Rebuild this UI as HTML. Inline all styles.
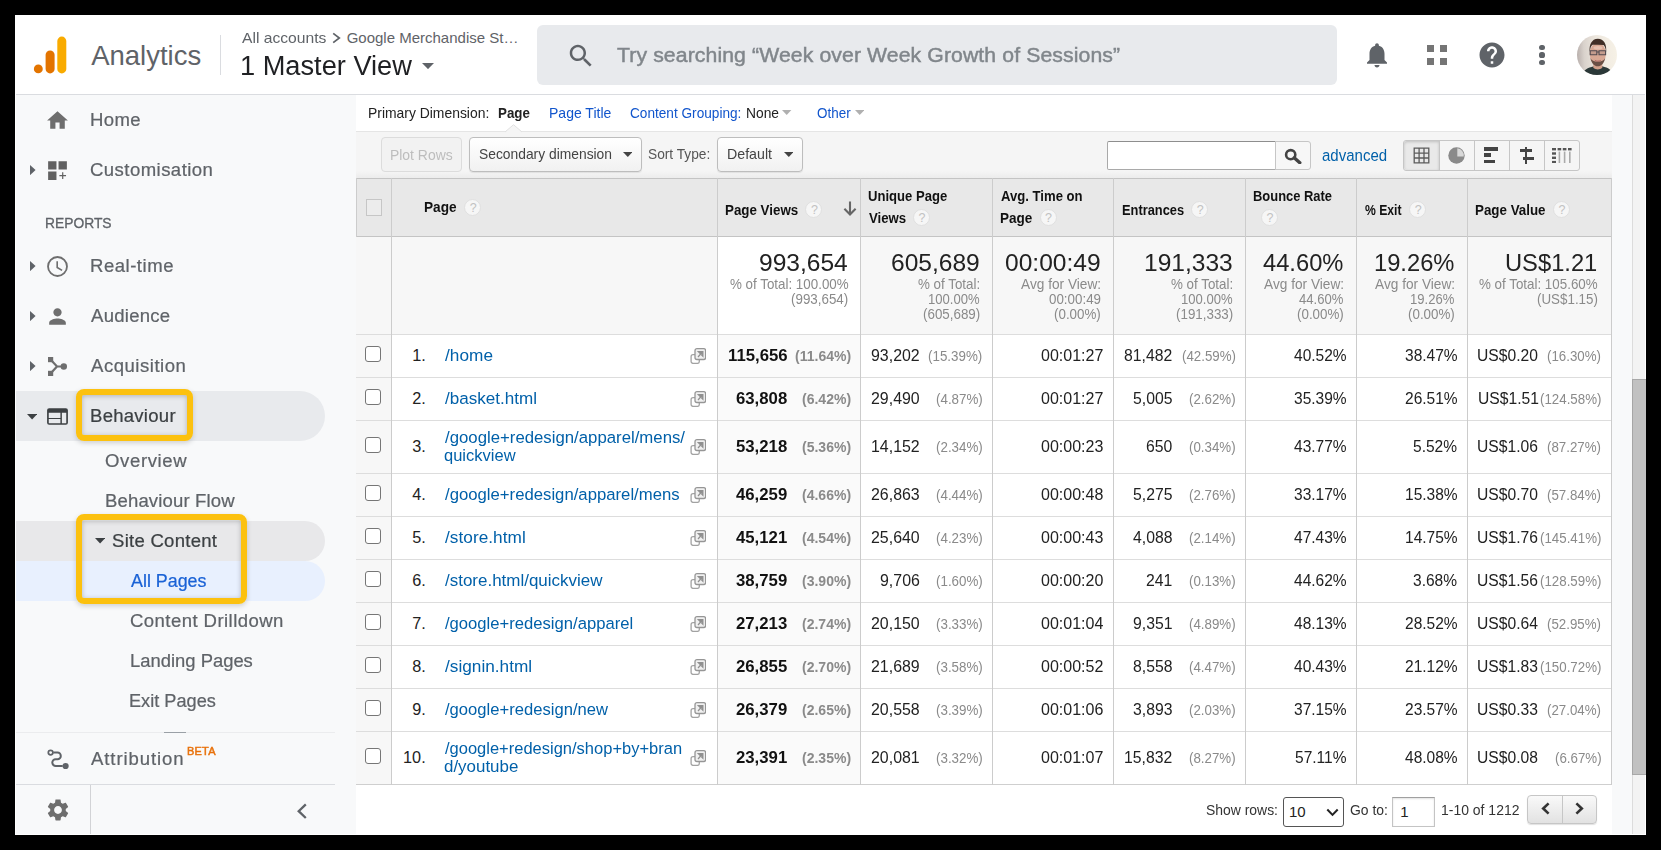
<!DOCTYPE html>
<html><head><meta charset="utf-8"><title>Analytics</title><style>
html,body{margin:0;padding:0;background:#000;}
body{width:1661px;height:850px;overflow:hidden;position:relative;font-family:"Liberation Sans",sans-serif;}
#app{position:absolute;left:0;top:0;width:1661px;height:850px;clip-path:inset(15px 15px 15px 15px);background:#fff;}
.r{position:absolute;box-sizing:border-box;display:block;}
.t{position:absolute;white-space:nowrap;line-height:1;display:block;transform-origin:0 0;}
</style></head><body><div id="app">
<div class="r" style="left:15px;top:15px;width:1631px;height:79px;background:#fff;"></div>
<div class="r" style="left:15px;top:94px;width:1631px;height:1px;background:#dadce0;"></div>
<div class="r" style="left:15px;top:95px;width:341px;height:740px;background:#f8f9fa;"></div>
<div class="r" style="left:356px;top:95px;width:1256px;height:740px;background:#fff;"></div>
<div class="r" style="left:1612px;top:95px;width:20px;height:740px;background:#f8f9fa;"></div>
<div class="r" style="left:1632px;top:95px;width:14px;height:740px;background:#f3f3f3;border-left:1px solid #dcdcdc;"></div>
<div class="r" style="left:1645px;top:15px;width:1px;height:820px;background:#fff;"></div>
<div class="r" style="left:1632px;top:379px;width:14px;height:396px;background:#c1c1c1;border-left:1px solid #a6a6a6;border-top:1px solid #a8a8a8;border-bottom:1px solid #a8a8a8;"></div>
<svg class="r" style="left:30px;top:30px" width="50" height="50" viewBox="0 0 50 50"><circle cx="8.3" cy="38.9" r="4.45" fill="#e37400"/><rect x="15.6" y="20.4" width="9" height="23" rx="4.5" fill="#e37400"/><rect x="27.3" y="6.6" width="9" height="36.8" rx="4.5" fill="#f9ab00"/></svg>
<span class="t" style="left:91.18px;top:42px;font-size:27.5px;color:#5f6368;">Analytics</span>
<div class="r" style="left:220px;top:35px;width:1px;height:40px;background:#dadce0;"></div>
<span class="t" style="left:241.9px;top:30px;font-size:15px;color:#5f6368;transform:scaleX(1.0439);">All accounts</span>
<svg class="r" style="left:331px;top:31px" width="12" height="14" viewBox="0 0 12 14"><path d="M2.200 2.400L8.300 7l-6.100 4.600" fill="none" stroke="#5f6368" stroke-width="1.700"/></svg>
<span class="t" style="left:346.65px;top:30px;font-size:15px;color:#5f6368;">Google Merchandise St…</span>
<span class="t" style="left:239.88px;top:53px;font-size:27px;color:#202124;transform:scaleX(1.0076);">1 Master View</span>
<svg class="r" style="left:421.5px;top:62.5px" width="12" height="6.2" viewBox="0 0 12 6"><path d="M0 0h12L6 6z" fill="#5f6368"/></svg>
<div class="r" style="left:537px;top:25px;width:800px;height:60px;background:#e8eaed;border-radius:6px;"></div>
<svg class="r" style="left:566px;top:41px;" width="30" height="30" viewBox="0 0 24 24"><path d="M15.5 14h-.79l-.28-.27C15.41 12.59 16 11.11 16 9.5 16 5.91 13.09 3 9.5 3S3 5.91 3 9.5 5.91 16 9.5 16c1.61 0 3.09-.59 4.23-1.57l.27.28v.79l5 4.99L20.49 19l-4.99-5zm-6 0C7.01 14 5 11.99 5 9.5S7.01 5 9.5 5 14 7.01 14 9.5 11.99 14 9.5 14z" fill="#5f6368"/></svg>
<span class="t" style="left:617.4px;top:45px;font-size:20px;color:#80868b;letter-spacing:0.1px;transform:scaleX(1.0600);-webkit-text-stroke:0.45px #80868b;">Try searching “Week over Week Growth of Sessions”</span>
<svg class="r" style="left:1362px;top:40px;" width="30" height="30" viewBox="0 0 24 24"><path d="M12 22c1.1 0 2-.9 2-2h-4c0 1.1.89 2 2 2zm6-6v-5c0-3.07-1.64-5.64-4.5-6.32V4c0-.83-.67-1.5-1.5-1.5s-1.5.67-1.5 1.5v.68C7.63 5.36 6 7.92 6 11v5l-2 2v1h16v-1l-2-2z" fill="#5f6368"/></svg>
<div class="r" style="left:1427px;top:44.9px;width:7.4px;height:7.4px;background:#757575;"></div>
<div class="r" style="left:1439.8px;top:44.9px;width:7.4px;height:7.4px;background:#757575;"></div>
<div class="r" style="left:1427px;top:57.7px;width:7.4px;height:7.4px;background:#757575;"></div>
<div class="r" style="left:1439.8px;top:57.7px;width:7.4px;height:7.4px;background:#757575;"></div>
<svg class="r" style="left:1477.2px;top:40px;" width="30" height="30" viewBox="0 0 24 24"><path d="M12 2C6.48 2 2 6.48 2 12s4.48 10 10 10 10-4.48 10-10S17.52 2 12 2zm1 17h-2v-2h2v2zm2.07-7.75l-.9.92C13.45 12.9 13 13.5 13 15h-2v-.5c0-1.1.45-2.1 1.17-2.83l1.24-1.26c.37-.36.59-.86.59-1.41 0-1.1-.9-2-2-2s-2 .9-2 2H8c0-2.21 1.79-4 4-4s4 1.79 4 4c0 .88-.36 1.68-.93 2.25z" fill="#5f6368"/></svg>
<div class="r" style="left:1539.4px;top:45px;width:5.2px;height:5.2px;background:#5f6368;border-radius:50%;"></div>
<div class="r" style="left:1539.4px;top:52.4px;width:5.2px;height:5.2px;background:#5f6368;border-radius:50%;"></div>
<div class="r" style="left:1539.4px;top:59.8px;width:5.2px;height:5.2px;background:#5f6368;border-radius:50%;"></div>
<svg class="r" style="left:1577px;top:35px" width="40" height="40" viewBox="0 0 40 40"><defs><clipPath id="av"><circle cx="20" cy="20" r="20"/></clipPath><linearGradient id="avbg" x1="0" y1="0.5" x2="1" y2="0.45"><stop offset="0" stop-color="#b9b0ad"/><stop offset="0.18" stop-color="#d9d2cc"/><stop offset="0.5" stop-color="#eee8df"/><stop offset="1" stop-color="#f6f1e6"/></linearGradient><filter id="avbl" x="-10%" y="-10%" width="120%" height="120%"><feGaussianBlur stdDeviation="0.700"/></filter></defs><g clip-path="url(#av)"><rect width="40" height="40" fill="url(#avbg)"/><g filter="url(#avbl)"><path d="M5 41c.5-5 4-7.500 9.500-9l3-1h7l3 1c5.500 1.500 8 4 8.500 9z" fill="#2c3838"/><path d="M16.300 25h9v7.800c-2.800 2.300-6.200 2.300-9 0z" fill="#d2a08b"/><ellipse cx="20.800" cy="18.800" rx="8.100" ry="11" fill="#d8a894"/><path d="M13.400 23c1 5.500 4 8.300 7.400 8.300s6.400-2.800 7.400-8.300c-1.400 2.600-3.600 3.600-7.400 3.600s-6-1-7.400-3.600z" fill="#6b4f45"/><path d="M12.700 17c-.9-6.800 2-13.200 8.100-13.200s9.200 5.600 8.300 13.200c-.4-3.600-1.300-5.900-2.700-6.900-3.600-.4-7.200-.4-10.800-.4-1.600 1-2.500 3.500-2.900 7.300z" fill="#3f2f28"/><ellipse cx="21" cy="12.800" rx="4.500" ry="1.800" fill="#e6c1b0"/><path d="M13.200 15.800h6.600v3.900h-6.600zM22 15.800h6.600v3.900h-6.600zM19.800 17h2.200" fill="rgba(120,110,115,.2)" stroke="#514a50" stroke-width="1.100"/><path d="M17.800 25.300c2 1.100 4 1.100 6 0" fill="none" stroke="#b56a66" stroke-width="1"/></g></g></svg>
<div class="r" style="left:15px;top:391px;width:310px;height:50px;background:#e8eaed;border-radius:0 25px 25px 0;"></div>
<div class="r" style="left:15px;top:521px;width:310px;height:40px;background:#e8e8ea;border-radius:0 20px 20px 0;"></div>
<div class="r" style="left:15px;top:561px;width:310px;height:40px;background:#e8f0fe;border-radius:0 20px 20px 0;"></div>
<svg class="r" style="left:45px;top:107.9px;" width="25" height="25" viewBox="0 0 24 24"><path d="M10 20v-6h4v6h5v-8h3L12 3 2 12h3v8z" fill="#6e6e6e"/></svg>
<svg class="r" style="left:45px;top:158.1px;" width="25" height="25" viewBox="0 0 24 24"><path d="M3 3h8v8H3zm10 0h8v8h-8zM3 13h8v8H3zM16.420 13.700h1.160v2.620h2.620v1.160h-2.620v2.620h-1.160v-2.620h-2.620v-1.160h2.620z" fill="#616161"/></svg>
<svg class="r" style="left:45px;top:253.8px;" width="25" height="25" viewBox="0 0 24 24"><circle cx="12" cy="12" r="9.100" fill="none" stroke="#6e6e6e" stroke-width="1.750"/><path d="M11.700 7v5.900l4.700 2.800" fill="none" stroke="#6e6e6e" stroke-width="1.550"/></svg>
<svg class="r" style="left:45px;top:304.1px;" width="25" height="25" viewBox="0 0 24 24"><path d="M12 12c2.210 0 4-1.790 4-4s-1.790-4-4-4-4 1.790-4 4 1.790 4 4 4zm0 2c-2.670 0-8 1.340-8 4v2h16v-2c0-2.660-5.330-4-8-4z" fill="#6e6e6e"/></svg>
<svg class="r" style="left:47.5px;top:357px" width="20" height="19" viewBox="0 0 20 19"><g fill="#6e6e6e"><rect x="0" y="0" width="5.200" height="5.200"/><rect x="0" y="13.800" width="5.200" height="5.200"/><circle cx="15.800" cy="9.500" r="3.200"/></g><path d="M3 3l6 6.500h7M3 16l6-6.500" fill="none" stroke="#6e6e6e" stroke-width="2.200"/></svg>
<svg class="r" style="left:45px;top:404px;" width="25" height="25" viewBox="0 0 24 24"><path fill-rule="evenodd" d="M4 4h16a2 2 0 0 1 2 2v12a2 2 0 0 1-2 2H4a2 2 0 0 1-2-2V6a2 2 0 0 1 2-2zM3.600 8.500v4.900h11.200V8.500zM3.600 14.500v3.900h11.200v-3.900zM16.200 8.500v9.900h4.200V8.500z" fill="#3c4043"/></svg>
<svg class="r" style="left:30.200px;top:165.1px" width="5.600" height="10.200" viewBox="0 0 5.600 10.200"><path d="M0 0l5.600 5.100L0 10.200z" fill="#5f6368"/></svg>
<svg class="r" style="left:30.200px;top:261.3px" width="5.600" height="10.200" viewBox="0 0 5.600 10.200"><path d="M0 0l5.600 5.100L0 10.200z" fill="#5f6368"/></svg>
<svg class="r" style="left:30.200px;top:311.1px" width="5.600" height="10.200" viewBox="0 0 5.600 10.200"><path d="M0 0l5.600 5.100L0 10.200z" fill="#5f6368"/></svg>
<svg class="r" style="left:30.200px;top:361.2px" width="5.600" height="10.200" viewBox="0 0 5.600 10.200"><path d="M0 0l5.600 5.100L0 10.200z" fill="#5f6368"/></svg>
<svg class="r" style="left:27.200px;top:414px" width="10.200" height="5.500" viewBox="0 0 10.200 5.500"><path d="M0 0h10.200L5.100 5.500z" fill="#3c4043"/></svg>
<svg class="r" style="left:95px;top:538.300px" width="10.200" height="5.500" viewBox="0 0 10.200 5.500"><path d="M0 0h10.200L5.100 5.500z" fill="#3c4043"/></svg>
<span class="t" style="left:89.64px;top:112px;font-size:17.5px;color:#5f6368;letter-spacing:0.38px;transform:scaleX(1.0600);-webkit-text-stroke:0.22px #5f6368;">Home</span>
<span class="t" style="left:90.17px;top:162px;font-size:17.5px;color:#5f6368;letter-spacing:0.42px;transform:scaleX(1.0600);-webkit-text-stroke:0.22px #5f6368;">Customisation</span>
<span class="t" style="left:44.87px;top:217px;font-size:13.75px;color:#5f6368;transform:scaleX(1.0050);-webkit-text-stroke:0.3px #5f6368;">REPORTS</span>
<span class="t" style="left:89.64px;top:258px;font-size:17.5px;color:#5f6368;letter-spacing:0.48px;transform:scaleX(1.0600);-webkit-text-stroke:0.22px #5f6368;">Real-time</span>
<span class="t" style="left:91.1px;top:308px;font-size:17.5px;color:#5f6368;letter-spacing:0.24px;transform:scaleX(1.0600);-webkit-text-stroke:0.22px #5f6368;">Audience</span>
<span class="t" style="left:91.1px;top:358px;font-size:17.5px;color:#5f6368;letter-spacing:0.49px;transform:scaleX(1.0600);-webkit-text-stroke:0.22px #5f6368;">Acquisition</span>
<span class="t" style="left:89.64px;top:408px;font-size:17.5px;color:#3c4043;letter-spacing:0.24px;transform:scaleX(1.0600);-webkit-text-stroke:0.22px #3c4043;">Behaviour</span>
<span class="t" style="left:105.07px;top:453px;font-size:17.5px;color:#5f6368;letter-spacing:0.59px;transform:scaleX(1.0600);-webkit-text-stroke:0.22px #5f6368;">Overview</span>
<span class="t" style="left:104.54px;top:493px;font-size:17.5px;color:#5f6368;letter-spacing:0.13px;transform:scaleX(1.0600);-webkit-text-stroke:0.22px #5f6368;">Behaviour Flow</span>
<span class="t" style="left:112.07px;top:533px;font-size:17.5px;color:#3c4043;letter-spacing:0.25px;transform:scaleX(1.0600);-webkit-text-stroke:0.22px #3c4043;">Site Content</span>
<span class="t" style="left:131.1px;top:573px;font-size:17.5px;color:#1a62d6;transform:scaleX(1.0212);-webkit-text-stroke:0.22px #1a62d6;">All Pages</span>
<span class="t" style="left:130.17px;top:613px;font-size:17.5px;color:#5f6368;letter-spacing:0.41px;transform:scaleX(1.0600);-webkit-text-stroke:0.22px #5f6368;">Content Drilldown</span>
<span class="t" style="left:129.65px;top:653px;font-size:17.5px;color:#5f6368;transform:scaleX(1.0519);-webkit-text-stroke:0.22px #5f6368;">Landing Pages</span>
<span class="t" style="left:129.47px;top:693px;font-size:17.5px;color:#5f6368;transform:scaleX(1.0377);-webkit-text-stroke:0.22px #5f6368;">Exit Pages</span>
<div class="r" style="left:15px;top:732px;width:320px;height:1px;background:#ebecee;"></div>
<div class="r" style="left:164px;top:732px;width:22px;height:1px;background:#9aa0a6;"></div>
<div class="r" style="left:15px;top:784px;width:320px;height:1px;background:#dadce0;"></div>
<div class="r" style="left:90px;top:785px;width:1px;height:50px;background:#d2d3d6;"></div>
<svg class="r" style="left:46.500px;top:748.600px" width="23" height="21" viewBox="0 0 23 21"><circle cx="3.600" cy="3.600" r="2.300" fill="none" stroke="#5f6368" stroke-width="1.700"/><path d="M6.300 3.600h4.200a3.300 3.300 0 0 1 0 6.600h-1.800a3.400 3.400 0 0 0 0 6.800h7" fill="none" stroke="#5f6368" stroke-width="2"/><circle cx="18.600" cy="17" r="3.100" fill="#5f6368"/></svg>
<span class="t" style="left:90.6px;top:751px;font-size:17.5px;color:#5f6368;letter-spacing:0.85px;transform:scaleX(1.0600);-webkit-text-stroke:0.22px #5f6368;">Attribution</span>
<span class="t" style="left:187.07px;top:747px;font-size:10.4px;color:#e8710a;letter-spacing:0.2px;transform:scaleX(1.0600);-webkit-text-stroke:0.45px #e8710a;">BETA</span>
<svg class="r" style="left:44.9px;top:797.1px;" width="26" height="26" viewBox="0 0 24 24"><path d="M19.140 12.940c.040-.300.060-.610.060-.940 0-.320-.020-.640-.070-.940l2.030-1.580c.180-.140.230-.410.120-.610l-1.920-3.320c-.120-.220-.370-.290-.590-.220l-2.390.960c-.500-.380-1.030-.700-1.620-.940l-.360-2.540c-.040-.240-.240-.410-.480-.410h-3.840c-.240 0-.430.170-.470.410l-.360 2.540c-.590.240-1.130.570-1.620.940l-2.390-.960c-.220-.080-.470 0-.590.220L2.740 8.870c-.120.210-.080.470.120.610l2.030 1.580c-.050.300-.090.630-.090.940s.020.640.070.940l-2.030 1.580c-.180.140-.230.410-.120.610l1.920 3.320c.120.220.370.290.590.220l2.390-.960c.500.380 1.030.700 1.620.940l.360 2.540c.050.240.240.410.480.410h3.840c.240 0 .440-.170.470-.410l.360-2.540c.590-.240 1.130-.560 1.620-.940l2.390.960c.220.080.470 0 .590-.220l1.920-3.320c.120-.220.070-.470-.120-.610l-2.010-1.580zM12 15.600c-1.980 0-3.600-1.620-3.600-3.600s1.620-3.600 3.600-3.600 3.600 1.620 3.600 3.600-1.620 3.600-3.600 3.600z" fill="#6e6e6e"/></svg>
<svg class="r" style="left:295px;top:802px" width="14" height="18" viewBox="0 0 14 18"><path d="M10.800 2.400L3.700 9.200l7.100 6.800" fill="none" stroke="#5f6368" stroke-width="2.300"/></svg>
<div class="r" style="left:76.3px;top:388.9px;width:117.1px;height:51.8px;background:transparent;border:6.100px solid #fcc10f;border-radius:8px;background:transparent;box-shadow:0 2px 5px rgba(60,64,67,.22), inset 0 1px 5px rgba(60,64,67,.32);"></div>
<div class="r" style="left:76.4px;top:514.4px;width:170.3px;height:90px;background:transparent;border:6.100px solid #fcc10f;border-radius:8px;background:transparent;box-shadow:0 2px 5px rgba(60,64,67,.22), inset 0 1px 5px rgba(60,64,67,.32);"></div>
<span class="t" style="left:368.32px;top:106px;font-size:14.5px;color:#222;transform:scaleX(0.9587);">Primary Dimension:</span>
<span class="t" style="left:497.88px;top:106px;font-size:14.5px;color:#222;transform:scaleX(0.9203);font-weight:bold;">Page</span>
<span class="t" style="left:549.01px;top:106px;font-size:14.5px;color:#1155cc;transform:scaleX(0.9661);">Page Title</span>
<span class="t" style="left:630.2px;top:106px;font-size:14.5px;color:#1155cc;transform:scaleX(0.9399);">Content Grouping:</span>
<span class="t" style="left:745.73px;top:106px;font-size:14.5px;color:#222;transform:scaleX(0.9521);">None</span>
<svg class="r" style="left:782.400px;top:109.700px" width="9.400" height="5" viewBox="0 0 9.400 5"><path d="M0 0h9.400L4.700 5z" fill="#b0b0b0"/></svg>
<span class="t" style="left:817.22px;top:106px;font-size:14.5px;color:#1155cc;transform:scaleX(0.9268);">Other</span>
<svg class="r" style="left:855px;top:109.700px" width="9.400" height="5" viewBox="0 0 9.400 5"><path d="M0 0h9.400L4.700 5z" fill="#b0b0b0"/></svg>
<div class="r" style="left:356px;top:131px;width:1256px;height:1px;background:#e5e5e5;"></div>
<div class="r" style="left:356px;top:132px;width:1256px;height:46px;background:#f5f5f5;"></div>
<div class="r" style="left:356px;top:171px;width:1256px;height:7px;background:transparent;background:linear-gradient(#f5f5f5,#ececec);"></div>
<svg class="r" style="left:505px;top:124px" width="17" height="9" viewBox="0 0 17 9"><path d="M0 8.500L8.500 0.700 17 8.500z" fill="#f5f5f5"/><path d="M0 8L8.500 0.700 17 8" fill="none" stroke="#e0e0e0" stroke-width="1"/></svg>
<div class="r" style="left:381px;top:137px;width:81px;height:35px;background:#f2f2f2;border:1px solid #dcdcdc;border-radius:4px;"></div>
<span class="t" style="left:390.24px;top:147px;font-size:15px;color:#bdbdbd;transform:scaleX(0.9278);">Plot Rows</span>
<div class="r" style="left:469px;top:137px;width:173px;height:35px;background:#fafafa;border:1px solid #bdbdbd;border-radius:4px;background:linear-gradient(#ffffff,#f1f1f1);box-shadow:0 1px 1px rgba(0,0,0,.08);"></div>
<span class="t" style="left:478.52px;top:146px;font-size:15px;color:#444;transform:scaleX(0.9220);">Secondary dimension</span>
<svg class="r" style="left:622.600px;top:152px" width="9.600" height="5" viewBox="0 0 9.600 5"><path d="M0 0h9.600L4.800 5z" fill="#444"/></svg>
<span class="t" style="left:648.23px;top:146px;font-size:15px;color:#555;transform:scaleX(0.9152);">Sort Type:</span>
<div class="r" style="left:717px;top:137px;width:86px;height:35px;background:#fafafa;border:1px solid #bdbdbd;border-radius:4px;background:linear-gradient(#ffffff,#f1f1f1);box-shadow:0 1px 1px rgba(0,0,0,.08);"></div>
<span class="t" style="left:726.82px;top:146px;font-size:15px;color:#444;transform:scaleX(0.9470);">Default</span>
<svg class="r" style="left:783.500px;top:152px" width="9.600" height="5" viewBox="0 0 9.600 5"><path d="M0 0h9.600L4.800 5z" fill="#444"/></svg>
<div class="r" style="left:1107px;top:141px;width:169px;height:29px;background:#fff;border:1px solid #a9a9a9;border-top-color:#8e8e8e;border-radius:2px 0 0 2px;"></div>
<div class="r" style="left:1275px;top:141px;width:36px;height:29px;background:#f7f7f7;border:1px solid #c6c6c6;border-radius:0 3px 3px 0;"></div>
<svg class="r" style="left:1284px;top:147.500px" width="18" height="16.500" viewBox="0 0 18 16.500"><circle cx="6.700" cy="6.700" r="4.600" fill="none" stroke="#444" stroke-width="2.600"/><path d="M10.200 9.800l5.600 4.900" stroke="#444" stroke-width="3.400" stroke-linecap="round"/></svg>
<span class="t" style="left:1321.62px;top:147px;font-size:16.25px;color:#0060a9;transform:scaleX(0.9236);">advanced</span>
<div class="r" style="left:1403px;top:140px;width:177px;height:31px;background:#f5f5f5;border:1px solid #c6c6c6;border-radius:3px;"></div>
<div class="r" style="left:1404px;top:141px;width:35px;height:29px;background:#e9e9e9;border-radius:3px 0 0 3px;box-shadow:inset 0 1px 3px rgba(0,0,0,.18);"></div>
<div class="r" style="left:1438.5px;top:141px;width:1px;height:29px;background:#c6c6c6;"></div>
<div class="r" style="left:1473.5px;top:141px;width:1px;height:29px;background:#c6c6c6;"></div>
<div class="r" style="left:1508.5px;top:141px;width:1px;height:29px;background:#c6c6c6;"></div>
<div class="r" style="left:1543.5px;top:141px;width:1px;height:29px;background:#c6c6c6;"></div>
<svg class="r" style="left:1413px;top:147.200px" width="17" height="17" viewBox="0 0 17 17"><path d="M1.200 1.200h14.600v14.600H1.200zM1.200 6.100h14.600M1.200 11h14.600M6.100 1.200v14.600M11 1.200v14.600" fill="none" stroke="#5c5c5c" stroke-width="1.300"/></svg>
<svg class="r" style="left:1447.700px;top:147.200px" width="17" height="17" viewBox="0 0 17 17"><circle cx="8.500" cy="8.500" r="8.200" fill="#8a8a8a"/><path d="M9.300 1.300a7.300 7.300 0 0 1 6.400 8.200h-6.400z" fill="#d8d8d8"/></svg>
<div class="r" style="left:1483.5px;top:147.2px;width:14.5px;height:3.7px;background:#444;"></div>
<div class="r" style="left:1483.5px;top:153.4px;width:7.6px;height:3.7px;background:#444;"></div>
<div class="r" style="left:1483.5px;top:159.6px;width:11.1px;height:3.9px;background:#444;"></div>
<div class="r" style="left:1525px;top:147.2px;width:2.3px;height:16.4px;background:#444;"></div>
<div class="r" style="left:1519.5px;top:149.4px;width:12.8px;height:2.3px;background:#444;"></div>
<div class="r" style="left:1523px;top:157.4px;width:11.3px;height:2.3px;background:#444;"></div>
<svg class="r" style="left:1551.700px;top:147.800px" width="20" height="15.500" viewBox="0 0 20 15.500"><g fill="#555"><rect x="0" y="0" width="4" height="2.400"/><rect x="0" y="4.300" width="4" height="2.400"/><rect x="0" y="8.600" width="4" height="2.400"/><rect x="0" y="12.900" width="4" height="2.400"/><rect x="5.600" y="0" width="3.600" height="2.400"/><rect x="10.800" y="0" width="3.600" height="2.400"/><rect x="16" y="0" width="3.600" height="2.400"/></g><g fill="#aaa"><rect x="6.600" y="3.600" width="1.600" height="11.700"/><rect x="11.800" y="3.600" width="1.600" height="11.700"/><rect x="17" y="3.600" width="1.600" height="11.700"/></g></svg>
<div class="r" style="left:356px;top:178px;width:1256px;height:59px;background:#e8e8e8;"></div>
<div class="r" style="left:356px;top:237px;width:1256px;height:97px;background:#f7f7f7;"></div>
<div class="r" style="left:718px;top:237px;width:142px;height:97px;background:#fff;"></div>
<div class="r" style="left:356px;top:335px;width:35px;height:449px;background:#f7f7f7;"></div>
<div class="r" style="left:718px;top:335px;width:142px;height:449px;background:#fafafa;"></div>
<div class="r" style="left:356px;top:178px;width:1256px;height:1px;background:#c4c4c4;"></div>
<div class="r" style="left:356px;top:236px;width:1256px;height:1px;background:#c4c4c4;"></div>
<div class="r" style="left:356px;top:334px;width:1256px;height:1px;background:#dddddd;"></div>
<div class="r" style="left:356px;top:377px;width:1256px;height:1px;background:#dddddd;"></div>
<div class="r" style="left:356px;top:420px;width:1256px;height:1px;background:#dddddd;"></div>
<div class="r" style="left:356px;top:473px;width:1256px;height:1px;background:#dddddd;"></div>
<div class="r" style="left:356px;top:516px;width:1256px;height:1px;background:#dddddd;"></div>
<div class="r" style="left:356px;top:559px;width:1256px;height:1px;background:#dddddd;"></div>
<div class="r" style="left:356px;top:602px;width:1256px;height:1px;background:#dddddd;"></div>
<div class="r" style="left:356px;top:645px;width:1256px;height:1px;background:#dddddd;"></div>
<div class="r" style="left:356px;top:688px;width:1256px;height:1px;background:#dddddd;"></div>
<div class="r" style="left:356px;top:731px;width:1256px;height:1px;background:#dddddd;"></div>
<div class="r" style="left:356px;top:784px;width:1256px;height:1px;background:#cfcfcf;"></div>
<div class="r" style="left:391px;top:178px;width:1px;height:607px;background:#cccccc;"></div>
<div class="r" style="left:717px;top:178px;width:1px;height:607px;background:#cccccc;"></div>
<div class="r" style="left:860px;top:178px;width:1px;height:607px;background:#cccccc;"></div>
<div class="r" style="left:992px;top:178px;width:1px;height:607px;background:#cccccc;"></div>
<div class="r" style="left:1113px;top:178px;width:1px;height:607px;background:#cccccc;"></div>
<div class="r" style="left:1245px;top:178px;width:1px;height:607px;background:#cccccc;"></div>
<div class="r" style="left:1356px;top:178px;width:1px;height:607px;background:#cccccc;"></div>
<div class="r" style="left:1467px;top:178px;width:1px;height:607px;background:#cccccc;"></div>
<div class="r" style="left:1611px;top:178px;width:1px;height:607px;background:#cccccc;"></div>
<div class="r" style="left:356px;top:178px;width:1px;height:59px;background:#cccccc;"></div>
<div class="r" style="left:366px;top:199px;width:16px;height:16.5px;background:#ececec;border:1px solid #c6c6c6;"></div>
<span class="t" style="left:423.96px;top:200px;font-size:14.5px;color:#111;transform:scaleX(0.9414);font-weight:bold;">Page</span>
<div class="r" style="left:464.1px;top:199.2px;width:17px;height:17px;background:#f6f6f6;border-radius:50%;border:1px solid #e0e0e0;"></div>
<span class="t" style="left:469.7px;top:202px;font-size:12.5px;color:#c2c2c2;">?</span>
<span class="t" style="left:725.08px;top:203px;font-size:14.5px;color:#111;transform:scaleX(0.9205);font-weight:bold;">Page Views</span>
<div class="r" style="left:805.4px;top:200.8px;width:17px;height:17px;background:#f6f6f6;border-radius:50%;border:1px solid #e0e0e0;"></div>
<span class="t" style="left:811px;top:204px;font-size:12.5px;color:#c2c2c2;">?</span>
<svg class="r" style="left:843px;top:200.500px" width="14" height="15" viewBox="0 0 14 15"><path d="M7 0.600v12.600M1.400 7.800L7 13.400l5.600-5.600" fill="none" stroke="#666" stroke-width="2.100"/></svg>
<span class="t" style="left:868.11px;top:189px;font-size:14.5px;color:#111;transform:scaleX(0.9017);font-weight:bold;">Unique Page</span>
<span class="t" style="left:868.79px;top:211px;font-size:14.5px;color:#111;transform:scaleX(0.9097);font-weight:bold;">Views</span>
<div class="r" style="left:913px;top:209.1px;width:17px;height:17px;background:#f6f6f6;border-radius:50%;border:1px solid #e0e0e0;"></div>
<span class="t" style="left:918.6px;top:212px;font-size:12.5px;color:#c2c2c2;">?</span>
<span class="t" style="left:1000.56px;top:189px;font-size:14.5px;color:#111;transform:scaleX(0.9045);font-weight:bold;">Avg. Time on</span>
<span class="t" style="left:999.97px;top:211px;font-size:14.5px;color:#111;transform:scaleX(0.9323);font-weight:bold;">Page</span>
<div class="r" style="left:1039.5px;top:209.1px;width:17px;height:17px;background:#f6f6f6;border-radius:50%;border:1px solid #e0e0e0;"></div>
<span class="t" style="left:1045.1px;top:212px;font-size:12.5px;color:#c2c2c2;">?</span>
<span class="t" style="left:1121.51px;top:203px;font-size:14.5px;color:#111;transform:scaleX(0.8861);font-weight:bold;">Entrances</span>
<div class="r" style="left:1191.1px;top:200.8px;width:17px;height:17px;background:#f6f6f6;border-radius:50%;border:1px solid #e0e0e0;"></div>
<span class="t" style="left:1196.7px;top:204px;font-size:12.5px;color:#c2c2c2;">?</span>
<span class="t" style="left:1253.41px;top:189px;font-size:14.5px;color:#111;transform:scaleX(0.8917);font-weight:bold;">Bounce Rate</span>
<div class="r" style="left:1260.9px;top:209.2px;width:17px;height:17px;background:#f6f6f6;border-radius:50%;border:1px solid #e0e0e0;"></div>
<span class="t" style="left:1266.5px;top:212px;font-size:12.5px;color:#c2c2c2;">?</span>
<span class="t" style="left:1364.89px;top:203px;font-size:14.5px;color:#111;transform:scaleX(0.8395);font-weight:bold;">% Exit</span>
<div class="r" style="left:1409.2px;top:200.8px;width:17px;height:17px;background:#f6f6f6;border-radius:50%;border:1px solid #e0e0e0;"></div>
<span class="t" style="left:1414.8px;top:204px;font-size:12.5px;color:#c2c2c2;">?</span>
<span class="t" style="left:1475.48px;top:203px;font-size:14.5px;color:#111;transform:scaleX(0.9211);font-weight:bold;">Page Value</span>
<div class="r" style="left:1552.8px;top:200.8px;width:17px;height:17px;background:#f6f6f6;border-radius:50%;border:1px solid #e0e0e0;"></div>
<span class="t" style="left:1558.4px;top:204px;font-size:12.5px;color:#c2c2c2;">?</span>
<span class="t" style="left:759.22px;top:251px;font-size:24px;color:#222;transform:scaleX(1.0230);">993,654</span>
<span class="t" style="left:729.58px;top:278px;font-size:13.75px;color:#8a8a8a;transform:scaleX(0.9720);">% of Total: 100.00%</span>
<span class="t" style="left:791.42px;top:293px;font-size:13.75px;color:#8a8a8a;transform:scaleX(0.9720);">(993,654)</span>
<span class="t" style="left:891.11px;top:251px;font-size:24px;color:#222;transform:scaleX(1.0230);">605,689</span>
<span class="t" style="left:918.31px;top:278px;font-size:13.75px;color:#8a8a8a;transform:scaleX(0.9720);">% of Total:</span>
<span class="t" style="left:928.24px;top:293px;font-size:13.75px;color:#8a8a8a;transform:scaleX(0.9500);">100.00%</span>
<span class="t" style="left:922.92px;top:308px;font-size:13.75px;color:#8a8a8a;transform:scaleX(0.9720);">(605,689)</span>
<span class="t" style="left:1005.2px;top:251px;font-size:24px;color:#222;transform:scaleX(1.0230);">00:00:49</span>
<span class="t" style="left:1021.45px;top:278px;font-size:13.75px;color:#8a8a8a;transform:scaleX(0.9950);">Avg for View:</span>
<span class="t" style="left:1048.91px;top:293px;font-size:13.75px;color:#8a8a8a;transform:scaleX(0.9720);">00:00:49</span>
<span class="t" style="left:1054.25px;top:308px;font-size:13.75px;color:#8a8a8a;transform:scaleX(0.9720);">(0.00%)</span>
<span class="t" style="left:1144.11px;top:251px;font-size:24px;color:#222;transform:scaleX(1.0230);">191,333</span>
<span class="t" style="left:1171.31px;top:278px;font-size:13.75px;color:#8a8a8a;transform:scaleX(0.9720);">% of Total:</span>
<span class="t" style="left:1181.24px;top:293px;font-size:13.75px;color:#8a8a8a;transform:scaleX(0.9500);">100.00%</span>
<span class="t" style="left:1175.92px;top:308px;font-size:13.75px;color:#8a8a8a;transform:scaleX(0.9720);">(191,333)</span>
<span class="t" style="left:1263.17px;top:251px;font-size:24px;color:#222;transform:scaleX(0.9880);">44.60%</span>
<span class="t" style="left:1264.45px;top:278px;font-size:13.75px;color:#8a8a8a;transform:scaleX(0.9950);">Avg for View:</span>
<span class="t" style="left:1299.48px;top:293px;font-size:13.75px;color:#8a8a8a;transform:scaleX(0.9500);">44.60%</span>
<span class="t" style="left:1297.25px;top:308px;font-size:13.75px;color:#8a8a8a;transform:scaleX(0.9720);">(0.00%)</span>
<span class="t" style="left:1374.17px;top:251px;font-size:24px;color:#222;transform:scaleX(0.9880);">19.26%</span>
<span class="t" style="left:1375.45px;top:278px;font-size:13.75px;color:#8a8a8a;transform:scaleX(0.9950);">Avg for View:</span>
<span class="t" style="left:1410.48px;top:293px;font-size:13.75px;color:#8a8a8a;transform:scaleX(0.9500);">19.26%</span>
<span class="t" style="left:1408.25px;top:308px;font-size:13.75px;color:#8a8a8a;transform:scaleX(0.9720);">(0.00%)</span>
<span class="t" style="left:1505.06px;top:251px;font-size:24px;color:#222;transform:scaleX(0.9880);">US$1.21</span>
<span class="t" style="left:1478.58px;top:278px;font-size:13.75px;color:#8a8a8a;transform:scaleX(0.9720);">% of Total: 105.60%</span>
<span class="t" style="left:1536.66px;top:293px;font-size:13.75px;color:#8a8a8a;transform:scaleX(0.9720);">(US$1.15)</span>
<div class="r" style="left:365.3px;top:346.3px;width:15.7px;height:15.7px;background:#fff;border:1.300px solid #767676;border-radius:3px;"></div>
<span class="t" style="left:412.2px;top:347px;font-size:16.25px;color:#222;">1.</span>
<span class="t" style="left:444.6px;top:347px;font-size:16.25px;color:#0060a9;letter-spacing:0.05px;transform:scaleX(1.0600);">/home</span>
<svg class="r" style="left:689.800px;top:347.7px" width="16.500" height="16.500" viewBox="0 0 16.500 16.500"><rect x="1.100" y="6.600" width="8.200" height="8.800" rx="2" fill="#fff" stroke="#a2a2a2" stroke-width="1.300"/><rect x="5" y="0.700" width="10.600" height="10.800" rx="2" fill="#f0f0f0" stroke="#969696" stroke-width="1.300"/><path d="M8.300 3.600h4.600v4.600zM12 4.500L8 9" fill="#909090" stroke="#909090" stroke-width="1.200"/></svg>
<span class="t" style="left:727.73px;top:347px;font-size:16.25px;color:#111;transform:scaleX(1.0300);font-weight:bold;">115,656</span>
<span class="t" style="left:794.84px;top:350px;font-size:13.75px;color:#8a8a8a;transform:scaleX(1.0200);font-weight:bold;">(11.64%)</span>
<span class="t" style="left:870.9px;top:347px;font-size:16.25px;color:#222;transform:scaleX(0.9800);">93,202</span>
<span class="t" style="left:928.34px;top:350px;font-size:13.75px;color:#8a8a8a;transform:scaleX(0.9720);">(15.39%)</span>
<span class="t" style="left:1041.04px;top:347px;font-size:16.25px;color:#222;transform:scaleX(0.9850);">00:01:27</span>
<span class="t" style="left:1124.49px;top:347px;font-size:16.25px;color:#222;transform:scaleX(0.9700);">81,482</span>
<span class="t" style="left:1181.56px;top:350px;font-size:13.75px;color:#8a8a8a;transform:scaleX(0.9680);">(42.59%)</span>
<span class="t" style="left:1293.65px;top:347px;font-size:16.25px;color:#222;transform:scaleX(0.9550);">40.52%</span>
<span class="t" style="left:1404.55px;top:347px;font-size:16.25px;color:#222;transform:scaleX(0.9550);">38.47%</span>
<span class="t" style="left:1477.39px;top:347px;font-size:16.25px;color:#222;transform:scaleX(0.9630);">US$0.20</span>
<span class="t" style="left:1547.46px;top:350px;font-size:13.75px;color:#8a8a8a;transform:scaleX(0.9680);">(16.30%)</span>
<div class="r" style="left:365.3px;top:389.3px;width:15.7px;height:15.7px;background:#fff;border:1.300px solid #767676;border-radius:3px;"></div>
<span class="t" style="left:412.2px;top:390px;font-size:16.25px;color:#222;">2.</span>
<span class="t" style="left:444.6px;top:390px;font-size:16.25px;color:#0060a9;transform:scaleX(1.0497);">/basket.html</span>
<svg class="r" style="left:689.800px;top:390.7px" width="16.500" height="16.500" viewBox="0 0 16.500 16.500"><rect x="1.100" y="6.600" width="8.200" height="8.800" rx="2" fill="#fff" stroke="#a2a2a2" stroke-width="1.300"/><rect x="5" y="0.700" width="10.600" height="10.800" rx="2" fill="#f0f0f0" stroke="#969696" stroke-width="1.300"/><path d="M8.300 3.600h4.600v4.600zM12 4.500L8 9" fill="#909090" stroke="#909090" stroke-width="1.200"/></svg>
<span class="t" style="left:736.1px;top:390px;font-size:16.25px;color:#111;transform:scaleX(1.0300);font-weight:bold;">63,808</span>
<span class="t" style="left:801.85px;top:393px;font-size:13.75px;color:#8a8a8a;transform:scaleX(1.0200);font-weight:bold;">(6.42%)</span>
<span class="t" style="left:870.78px;top:390px;font-size:16.25px;color:#222;transform:scaleX(0.9800);">29,490</span>
<span class="t" style="left:935.75px;top:393px;font-size:13.75px;color:#8a8a8a;transform:scaleX(0.9720);">(4.87%)</span>
<span class="t" style="left:1041.04px;top:390px;font-size:16.25px;color:#222;transform:scaleX(0.9850);">00:01:27</span>
<span class="t" style="left:1133.1px;top:390px;font-size:16.25px;color:#222;transform:scaleX(0.9700);">5,005</span>
<span class="t" style="left:1188.94px;top:393px;font-size:13.75px;color:#8a8a8a;transform:scaleX(0.9680);">(2.62%)</span>
<span class="t" style="left:1293.65px;top:390px;font-size:16.25px;color:#222;transform:scaleX(0.9550);">35.39%</span>
<span class="t" style="left:1404.55px;top:390px;font-size:16.25px;color:#222;transform:scaleX(0.9550);">26.51%</span>
<span class="t" style="left:1477.51px;top:390px;font-size:16.25px;color:#222;transform:scaleX(0.9630);">US$1.51</span>
<span class="t" style="left:1540.08px;top:393px;font-size:13.75px;color:#8a8a8a;transform:scaleX(0.9680);">(124.58%)</span>
<div class="r" style="left:365.3px;top:437.3px;width:15.7px;height:15.7px;background:#fff;border:1.300px solid #767676;border-radius:3px;"></div>
<span class="t" style="left:412.2px;top:438px;font-size:16.25px;color:#222;">3.</span>
<span class="t" style="left:444.6px;top:429px;font-size:16.25px;color:#0060a9;transform:scaleX(1.0317);">/google+redesign/apparel/mens/</span>
<span class="t" style="left:443.96px;top:447px;font-size:16.25px;color:#0060a9;transform:scaleX(1.0161);">quickview</span>
<svg class="r" style="left:689.800px;top:438.7px" width="16.500" height="16.500" viewBox="0 0 16.500 16.500"><rect x="1.100" y="6.600" width="8.200" height="8.800" rx="2" fill="#fff" stroke="#a2a2a2" stroke-width="1.300"/><rect x="5" y="0.700" width="10.600" height="10.800" rx="2" fill="#f0f0f0" stroke="#969696" stroke-width="1.300"/><path d="M8.300 3.600h4.600v4.600zM12 4.500L8 9" fill="#909090" stroke="#909090" stroke-width="1.200"/></svg>
<span class="t" style="left:736.1px;top:438px;font-size:16.25px;color:#111;transform:scaleX(1.0300);font-weight:bold;">53,218</span>
<span class="t" style="left:801.85px;top:441px;font-size:13.75px;color:#8a8a8a;transform:scaleX(1.0200);font-weight:bold;">(5.36%)</span>
<span class="t" style="left:870.9px;top:438px;font-size:16.25px;color:#222;transform:scaleX(0.9800);">14,152</span>
<span class="t" style="left:935.75px;top:441px;font-size:13.75px;color:#8a8a8a;transform:scaleX(0.9720);">(2.34%)</span>
<span class="t" style="left:1040.91px;top:438px;font-size:16.25px;color:#222;transform:scaleX(0.9850);">00:00:23</span>
<span class="t" style="left:1146.19px;top:438px;font-size:16.25px;color:#222;transform:scaleX(0.9700);">650</span>
<span class="t" style="left:1188.94px;top:441px;font-size:13.75px;color:#8a8a8a;transform:scaleX(0.9680);">(0.34%)</span>
<span class="t" style="left:1293.65px;top:438px;font-size:16.25px;color:#222;transform:scaleX(0.9550);">43.77%</span>
<span class="t" style="left:1413.15px;top:438px;font-size:16.25px;color:#222;transform:scaleX(0.9550);">5.52%</span>
<span class="t" style="left:1477.39px;top:438px;font-size:16.25px;color:#222;transform:scaleX(0.9630);">US$1.06</span>
<span class="t" style="left:1547.46px;top:441px;font-size:13.75px;color:#8a8a8a;transform:scaleX(0.9680);">(87.27%)</span>
<div class="r" style="left:365.3px;top:485.3px;width:15.7px;height:15.7px;background:#fff;border:1.300px solid #767676;border-radius:3px;"></div>
<span class="t" style="left:412.2px;top:486px;font-size:16.25px;color:#222;">4.</span>
<span class="t" style="left:444.6px;top:486px;font-size:16.25px;color:#0060a9;transform:scaleX(1.0286);">/google+redesign/apparel/mens</span>
<svg class="r" style="left:689.800px;top:486.7px" width="16.500" height="16.500" viewBox="0 0 16.500 16.500"><rect x="1.100" y="6.600" width="8.200" height="8.800" rx="2" fill="#fff" stroke="#a2a2a2" stroke-width="1.300"/><rect x="5" y="0.700" width="10.600" height="10.800" rx="2" fill="#f0f0f0" stroke="#969696" stroke-width="1.300"/><path d="M8.300 3.600h4.600v4.600zM12 4.500L8 9" fill="#909090" stroke="#909090" stroke-width="1.200"/></svg>
<span class="t" style="left:736.1px;top:486px;font-size:16.25px;color:#111;transform:scaleX(1.0300);font-weight:bold;">46,259</span>
<span class="t" style="left:801.85px;top:489px;font-size:13.75px;color:#8a8a8a;transform:scaleX(1.0200);font-weight:bold;">(4.66%)</span>
<span class="t" style="left:870.78px;top:486px;font-size:16.25px;color:#222;transform:scaleX(0.9800);">26,863</span>
<span class="t" style="left:935.75px;top:489px;font-size:13.75px;color:#8a8a8a;transform:scaleX(0.9720);">(4.44%)</span>
<span class="t" style="left:1040.91px;top:486px;font-size:16.25px;color:#222;transform:scaleX(0.9850);">00:00:48</span>
<span class="t" style="left:1133.1px;top:486px;font-size:16.25px;color:#222;transform:scaleX(0.9700);">5,275</span>
<span class="t" style="left:1188.94px;top:489px;font-size:13.75px;color:#8a8a8a;transform:scaleX(0.9680);">(2.76%)</span>
<span class="t" style="left:1293.65px;top:486px;font-size:16.25px;color:#222;transform:scaleX(0.9550);">33.17%</span>
<span class="t" style="left:1404.55px;top:486px;font-size:16.25px;color:#222;transform:scaleX(0.9550);">15.38%</span>
<span class="t" style="left:1477.39px;top:486px;font-size:16.25px;color:#222;transform:scaleX(0.9630);">US$0.70</span>
<span class="t" style="left:1547.46px;top:489px;font-size:13.75px;color:#8a8a8a;transform:scaleX(0.9680);">(57.84%)</span>
<div class="r" style="left:365.3px;top:528.3px;width:15.7px;height:15.7px;background:#fff;border:1.300px solid #767676;border-radius:3px;"></div>
<span class="t" style="left:412.2px;top:529px;font-size:16.25px;color:#222;">5.</span>
<span class="t" style="left:444.6px;top:529px;font-size:16.25px;color:#0060a9;letter-spacing:0.03px;transform:scaleX(1.0600);">/store.html</span>
<svg class="r" style="left:689.800px;top:529.7px" width="16.500" height="16.500" viewBox="0 0 16.500 16.500"><rect x="1.100" y="6.600" width="8.200" height="8.800" rx="2" fill="#fff" stroke="#a2a2a2" stroke-width="1.300"/><rect x="5" y="0.700" width="10.600" height="10.800" rx="2" fill="#f0f0f0" stroke="#969696" stroke-width="1.300"/><path d="M8.300 3.600h4.600v4.600zM12 4.500L8 9" fill="#909090" stroke="#909090" stroke-width="1.200"/></svg>
<span class="t" style="left:735.97px;top:529px;font-size:16.25px;color:#111;transform:scaleX(1.0300);font-weight:bold;">45,121</span>
<span class="t" style="left:801.85px;top:532px;font-size:13.75px;color:#8a8a8a;transform:scaleX(1.0200);font-weight:bold;">(4.54%)</span>
<span class="t" style="left:870.78px;top:529px;font-size:16.25px;color:#222;transform:scaleX(0.9800);">25,640</span>
<span class="t" style="left:935.75px;top:532px;font-size:13.75px;color:#8a8a8a;transform:scaleX(0.9720);">(4.23%)</span>
<span class="t" style="left:1040.91px;top:529px;font-size:16.25px;color:#222;transform:scaleX(0.9850);">00:00:43</span>
<span class="t" style="left:1133.1px;top:529px;font-size:16.25px;color:#222;transform:scaleX(0.9700);">4,088</span>
<span class="t" style="left:1188.94px;top:532px;font-size:13.75px;color:#8a8a8a;transform:scaleX(0.9680);">(2.14%)</span>
<span class="t" style="left:1293.65px;top:529px;font-size:16.25px;color:#222;transform:scaleX(0.9550);">47.43%</span>
<span class="t" style="left:1404.55px;top:529px;font-size:16.25px;color:#222;transform:scaleX(0.9550);">14.75%</span>
<span class="t" style="left:1477.39px;top:529px;font-size:16.25px;color:#222;transform:scaleX(0.9630);">US$1.76</span>
<span class="t" style="left:1540.08px;top:532px;font-size:13.75px;color:#8a8a8a;transform:scaleX(0.9680);">(145.41%)</span>
<div class="r" style="left:365.3px;top:571.3px;width:15.7px;height:15.7px;background:#fff;border:1.300px solid #767676;border-radius:3px;"></div>
<span class="t" style="left:412.2px;top:572px;font-size:16.25px;color:#222;">6.</span>
<span class="t" style="left:444.6px;top:572px;font-size:16.25px;color:#0060a9;transform:scaleX(1.0439);">/store.html/quickview</span>
<svg class="r" style="left:689.800px;top:572.7px" width="16.500" height="16.500" viewBox="0 0 16.500 16.500"><rect x="1.100" y="6.600" width="8.200" height="8.800" rx="2" fill="#fff" stroke="#a2a2a2" stroke-width="1.300"/><rect x="5" y="0.700" width="10.600" height="10.800" rx="2" fill="#f0f0f0" stroke="#969696" stroke-width="1.300"/><path d="M8.300 3.600h4.600v4.600zM12 4.500L8 9" fill="#909090" stroke="#909090" stroke-width="1.200"/></svg>
<span class="t" style="left:736.1px;top:572px;font-size:16.25px;color:#111;transform:scaleX(1.0300);font-weight:bold;">38,759</span>
<span class="t" style="left:801.85px;top:575px;font-size:13.75px;color:#8a8a8a;transform:scaleX(1.0200);font-weight:bold;">(3.90%)</span>
<span class="t" style="left:879.6px;top:572px;font-size:16.25px;color:#222;transform:scaleX(0.9800);">9,706</span>
<span class="t" style="left:935.75px;top:575px;font-size:13.75px;color:#8a8a8a;transform:scaleX(0.9720);">(1.60%)</span>
<span class="t" style="left:1040.91px;top:572px;font-size:16.25px;color:#222;transform:scaleX(0.9850);">00:00:20</span>
<span class="t" style="left:1146.32px;top:572px;font-size:16.25px;color:#222;transform:scaleX(0.9700);">241</span>
<span class="t" style="left:1188.94px;top:575px;font-size:13.75px;color:#8a8a8a;transform:scaleX(0.9680);">(0.13%)</span>
<span class="t" style="left:1293.65px;top:572px;font-size:16.25px;color:#222;transform:scaleX(0.9550);">44.62%</span>
<span class="t" style="left:1413.15px;top:572px;font-size:16.25px;color:#222;transform:scaleX(0.9550);">3.68%</span>
<span class="t" style="left:1477.39px;top:572px;font-size:16.25px;color:#222;transform:scaleX(0.9630);">US$1.56</span>
<span class="t" style="left:1540.08px;top:575px;font-size:13.75px;color:#8a8a8a;transform:scaleX(0.9680);">(128.59%)</span>
<div class="r" style="left:365.3px;top:614.3px;width:15.7px;height:15.7px;background:#fff;border:1.300px solid #767676;border-radius:3px;"></div>
<span class="t" style="left:412.2px;top:615px;font-size:16.25px;color:#222;">7.</span>
<span class="t" style="left:444.6px;top:615px;font-size:16.25px;color:#0060a9;transform:scaleX(1.0233);">/google+redesign/apparel</span>
<svg class="r" style="left:689.800px;top:615.7px" width="16.500" height="16.500" viewBox="0 0 16.500 16.500"><rect x="1.100" y="6.600" width="8.200" height="8.800" rx="2" fill="#fff" stroke="#a2a2a2" stroke-width="1.300"/><rect x="5" y="0.700" width="10.600" height="10.800" rx="2" fill="#f0f0f0" stroke="#969696" stroke-width="1.300"/><path d="M8.300 3.600h4.600v4.600zM12 4.500L8 9" fill="#909090" stroke="#909090" stroke-width="1.200"/></svg>
<span class="t" style="left:736.1px;top:615px;font-size:16.25px;color:#111;transform:scaleX(1.0300);font-weight:bold;">27,213</span>
<span class="t" style="left:801.85px;top:618px;font-size:13.75px;color:#8a8a8a;transform:scaleX(1.0200);font-weight:bold;">(2.74%)</span>
<span class="t" style="left:870.78px;top:615px;font-size:16.25px;color:#222;transform:scaleX(0.9800);">20,150</span>
<span class="t" style="left:935.75px;top:618px;font-size:13.75px;color:#8a8a8a;transform:scaleX(0.9720);">(3.33%)</span>
<span class="t" style="left:1040.67px;top:615px;font-size:16.25px;color:#222;transform:scaleX(0.9850);">00:01:04</span>
<span class="t" style="left:1133.22px;top:615px;font-size:16.25px;color:#222;transform:scaleX(0.9700);">9,351</span>
<span class="t" style="left:1188.94px;top:618px;font-size:13.75px;color:#8a8a8a;transform:scaleX(0.9680);">(4.89%)</span>
<span class="t" style="left:1293.65px;top:615px;font-size:16.25px;color:#222;transform:scaleX(0.9550);">48.13%</span>
<span class="t" style="left:1404.55px;top:615px;font-size:16.25px;color:#222;transform:scaleX(0.9550);">28.52%</span>
<span class="t" style="left:1477.15px;top:615px;font-size:16.25px;color:#222;transform:scaleX(0.9630);">US$0.64</span>
<span class="t" style="left:1547.46px;top:618px;font-size:13.75px;color:#8a8a8a;transform:scaleX(0.9680);">(52.95%)</span>
<div class="r" style="left:365.3px;top:657.3px;width:15.7px;height:15.7px;background:#fff;border:1.300px solid #767676;border-radius:3px;"></div>
<span class="t" style="left:412.2px;top:658px;font-size:16.25px;color:#222;">8.</span>
<span class="t" style="left:444.6px;top:658px;font-size:16.25px;color:#0060a9;transform:scaleX(1.0600);">/signin.html</span>
<svg class="r" style="left:689.800px;top:658.7px" width="16.500" height="16.500" viewBox="0 0 16.500 16.500"><rect x="1.100" y="6.600" width="8.200" height="8.800" rx="2" fill="#fff" stroke="#a2a2a2" stroke-width="1.300"/><rect x="5" y="0.700" width="10.600" height="10.800" rx="2" fill="#f0f0f0" stroke="#969696" stroke-width="1.300"/><path d="M8.300 3.600h4.600v4.600zM12 4.500L8 9" fill="#909090" stroke="#909090" stroke-width="1.200"/></svg>
<span class="t" style="left:735.97px;top:658px;font-size:16.25px;color:#111;transform:scaleX(1.0300);font-weight:bold;">26,855</span>
<span class="t" style="left:801.85px;top:661px;font-size:13.75px;color:#8a8a8a;transform:scaleX(1.0200);font-weight:bold;">(2.70%)</span>
<span class="t" style="left:870.9px;top:658px;font-size:16.25px;color:#222;transform:scaleX(0.9800);">21,689</span>
<span class="t" style="left:935.75px;top:661px;font-size:13.75px;color:#8a8a8a;transform:scaleX(0.9720);">(3.58%)</span>
<span class="t" style="left:1041.04px;top:658px;font-size:16.25px;color:#222;transform:scaleX(0.9850);">00:00:52</span>
<span class="t" style="left:1133.1px;top:658px;font-size:16.25px;color:#222;transform:scaleX(0.9700);">8,558</span>
<span class="t" style="left:1188.94px;top:661px;font-size:13.75px;color:#8a8a8a;transform:scaleX(0.9680);">(4.47%)</span>
<span class="t" style="left:1293.65px;top:658px;font-size:16.25px;color:#222;transform:scaleX(0.9550);">40.43%</span>
<span class="t" style="left:1404.55px;top:658px;font-size:16.25px;color:#222;transform:scaleX(0.9550);">21.12%</span>
<span class="t" style="left:1477.39px;top:658px;font-size:16.25px;color:#222;transform:scaleX(0.9630);">US$1.83</span>
<span class="t" style="left:1540.08px;top:661px;font-size:13.75px;color:#8a8a8a;transform:scaleX(0.9680);">(150.72%)</span>
<div class="r" style="left:365.3px;top:700.3px;width:15.7px;height:15.7px;background:#fff;border:1.300px solid #767676;border-radius:3px;"></div>
<span class="t" style="left:412.2px;top:701px;font-size:16.25px;color:#222;">9.</span>
<span class="t" style="left:444.6px;top:701px;font-size:16.25px;color:#0060a9;transform:scaleX(1.0219);">/google+redesign/new</span>
<svg class="r" style="left:689.800px;top:701.7px" width="16.500" height="16.500" viewBox="0 0 16.500 16.500"><rect x="1.100" y="6.600" width="8.200" height="8.800" rx="2" fill="#fff" stroke="#a2a2a2" stroke-width="1.300"/><rect x="5" y="0.700" width="10.600" height="10.800" rx="2" fill="#f0f0f0" stroke="#969696" stroke-width="1.300"/><path d="M8.300 3.600h4.600v4.600zM12 4.500L8 9" fill="#909090" stroke="#909090" stroke-width="1.200"/></svg>
<span class="t" style="left:736.1px;top:701px;font-size:16.25px;color:#111;transform:scaleX(1.0300);font-weight:bold;">26,379</span>
<span class="t" style="left:801.85px;top:704px;font-size:13.75px;color:#8a8a8a;transform:scaleX(1.0200);font-weight:bold;">(2.65%)</span>
<span class="t" style="left:870.78px;top:701px;font-size:16.25px;color:#222;transform:scaleX(0.9800);">20,558</span>
<span class="t" style="left:935.75px;top:704px;font-size:13.75px;color:#8a8a8a;transform:scaleX(0.9720);">(3.39%)</span>
<span class="t" style="left:1040.91px;top:701px;font-size:16.25px;color:#222;transform:scaleX(0.9850);">00:01:06</span>
<span class="t" style="left:1133.1px;top:701px;font-size:16.25px;color:#222;transform:scaleX(0.9700);">3,893</span>
<span class="t" style="left:1188.94px;top:704px;font-size:13.75px;color:#8a8a8a;transform:scaleX(0.9680);">(2.03%)</span>
<span class="t" style="left:1293.65px;top:701px;font-size:16.25px;color:#222;transform:scaleX(0.9550);">37.15%</span>
<span class="t" style="left:1404.55px;top:701px;font-size:16.25px;color:#222;transform:scaleX(0.9550);">23.57%</span>
<span class="t" style="left:1477.39px;top:701px;font-size:16.25px;color:#222;transform:scaleX(0.9630);">US$0.33</span>
<span class="t" style="left:1547.46px;top:704px;font-size:13.75px;color:#8a8a8a;transform:scaleX(0.9680);">(27.04%)</span>
<div class="r" style="left:365.3px;top:748.3px;width:15.7px;height:15.7px;background:#fff;border:1.300px solid #767676;border-radius:3px;"></div>
<span class="t" style="left:403.07px;top:749px;font-size:16.25px;color:#222;">10.</span>
<span class="t" style="left:444.6px;top:740px;font-size:16.25px;color:#0060a9;transform:scaleX(1.0151);">/google+redesign/shop+by+bran</span>
<span class="t" style="left:443.95px;top:758px;font-size:16.25px;color:#0060a9;transform:scaleX(1.0410);">d/youtube</span>
<svg class="r" style="left:689.800px;top:749.7px" width="16.500" height="16.500" viewBox="0 0 16.500 16.500"><rect x="1.100" y="6.600" width="8.200" height="8.800" rx="2" fill="#fff" stroke="#a2a2a2" stroke-width="1.300"/><rect x="5" y="0.700" width="10.600" height="10.800" rx="2" fill="#f0f0f0" stroke="#969696" stroke-width="1.300"/><path d="M8.300 3.600h4.600v4.600zM12 4.500L8 9" fill="#909090" stroke="#909090" stroke-width="1.200"/></svg>
<span class="t" style="left:735.97px;top:749px;font-size:16.25px;color:#111;transform:scaleX(1.0300);font-weight:bold;">23,391</span>
<span class="t" style="left:801.85px;top:752px;font-size:13.75px;color:#8a8a8a;transform:scaleX(1.0200);font-weight:bold;">(2.35%)</span>
<span class="t" style="left:870.9px;top:749px;font-size:16.25px;color:#222;transform:scaleX(0.9800);">20,081</span>
<span class="t" style="left:935.75px;top:752px;font-size:13.75px;color:#8a8a8a;transform:scaleX(0.9720);">(3.32%)</span>
<span class="t" style="left:1041.04px;top:749px;font-size:16.25px;color:#222;transform:scaleX(0.9850);">00:01:07</span>
<span class="t" style="left:1124.49px;top:749px;font-size:16.25px;color:#222;transform:scaleX(0.9700);">15,832</span>
<span class="t" style="left:1188.94px;top:752px;font-size:13.75px;color:#8a8a8a;transform:scaleX(0.9680);">(8.27%)</span>
<span class="t" style="left:1294.73px;top:749px;font-size:16.25px;color:#222;transform:scaleX(0.9550);">57.11%</span>
<span class="t" style="left:1404.55px;top:749px;font-size:16.25px;color:#222;transform:scaleX(0.9550);">48.08%</span>
<span class="t" style="left:1477.39px;top:749px;font-size:16.25px;color:#222;transform:scaleX(0.9630);">US$0.08</span>
<span class="t" style="left:1554.84px;top:752px;font-size:13.75px;color:#8a8a8a;transform:scaleX(0.9680);">(6.67%)</span>
<span class="t" style="left:1206.42px;top:802px;font-size:15px;color:#333;transform:scaleX(0.9285);">Show rows:</span>
<div class="r" style="left:1283.3px;top:797px;width:60.4px;height:30px;background:#fff;border:1.300px solid #555;border-radius:3px;"></div>
<span class="t" style="left:1288.98px;top:804px;font-size:15px;color:#222;">10</span>
<svg class="r" style="left:1325.500px;top:807.500px" width="13" height="9" viewBox="0 0 13 9"><path d="M1.300 1.500L6.500 6.900l5.200-5.400" fill="none" stroke="#222" stroke-width="2"/></svg>
<span class="t" style="left:1349.7px;top:802px;font-size:15px;color:#333;transform:scaleX(0.9290);">Go to:</span>
<div class="r" style="left:1392.2px;top:797px;width:42.6px;height:30px;background:#fff;border:1px solid #c4c4c4;border-top-color:#a0a0a0;box-shadow:inset 0 1px 2px rgba(0,0,0,.12);"></div>
<span class="t" style="left:1400.28px;top:804px;font-size:15px;color:#222;">1</span>
<span class="t" style="left:1440.85px;top:802px;font-size:15px;color:#333;transform:scaleX(0.9311);">1-10 of 1212</span>
<div class="r" style="left:1527px;top:795.2px;width:69.5px;height:28.6px;background:#eee;border:1px solid #c6c6c6;border-radius:4px;background:linear-gradient(#f9f9f9,#e2e2e2);box-shadow:0 1px 1px rgba(0,0,0,.12);"></div>
<div class="r" style="left:1561.5px;top:796.2px;width:1px;height:26.6px;background:#c6c6c6;"></div>
<svg class="r" style="left:1539.500px;top:802px" width="12" height="13" viewBox="0 0 12 13"><path d="M8.600 1.400L3.200 6.500l5.400 5.100" fill="none" stroke="#333" stroke-width="2.600"/></svg>
<svg class="r" style="left:1573px;top:802px" width="12" height="13" viewBox="0 0 12 13"><path d="M3.400 1.400L8.800 6.500l-5.400 5.100" fill="none" stroke="#333" stroke-width="2.600"/></svg>
<div class="r" style="left:15px;top:834px;width:1631px;height:1px;background:#fff;"></div>
<div class="r" style="left:15px;top:15px;width:1px;height:820px;background:#fff;"></div>
</div></body></html>
